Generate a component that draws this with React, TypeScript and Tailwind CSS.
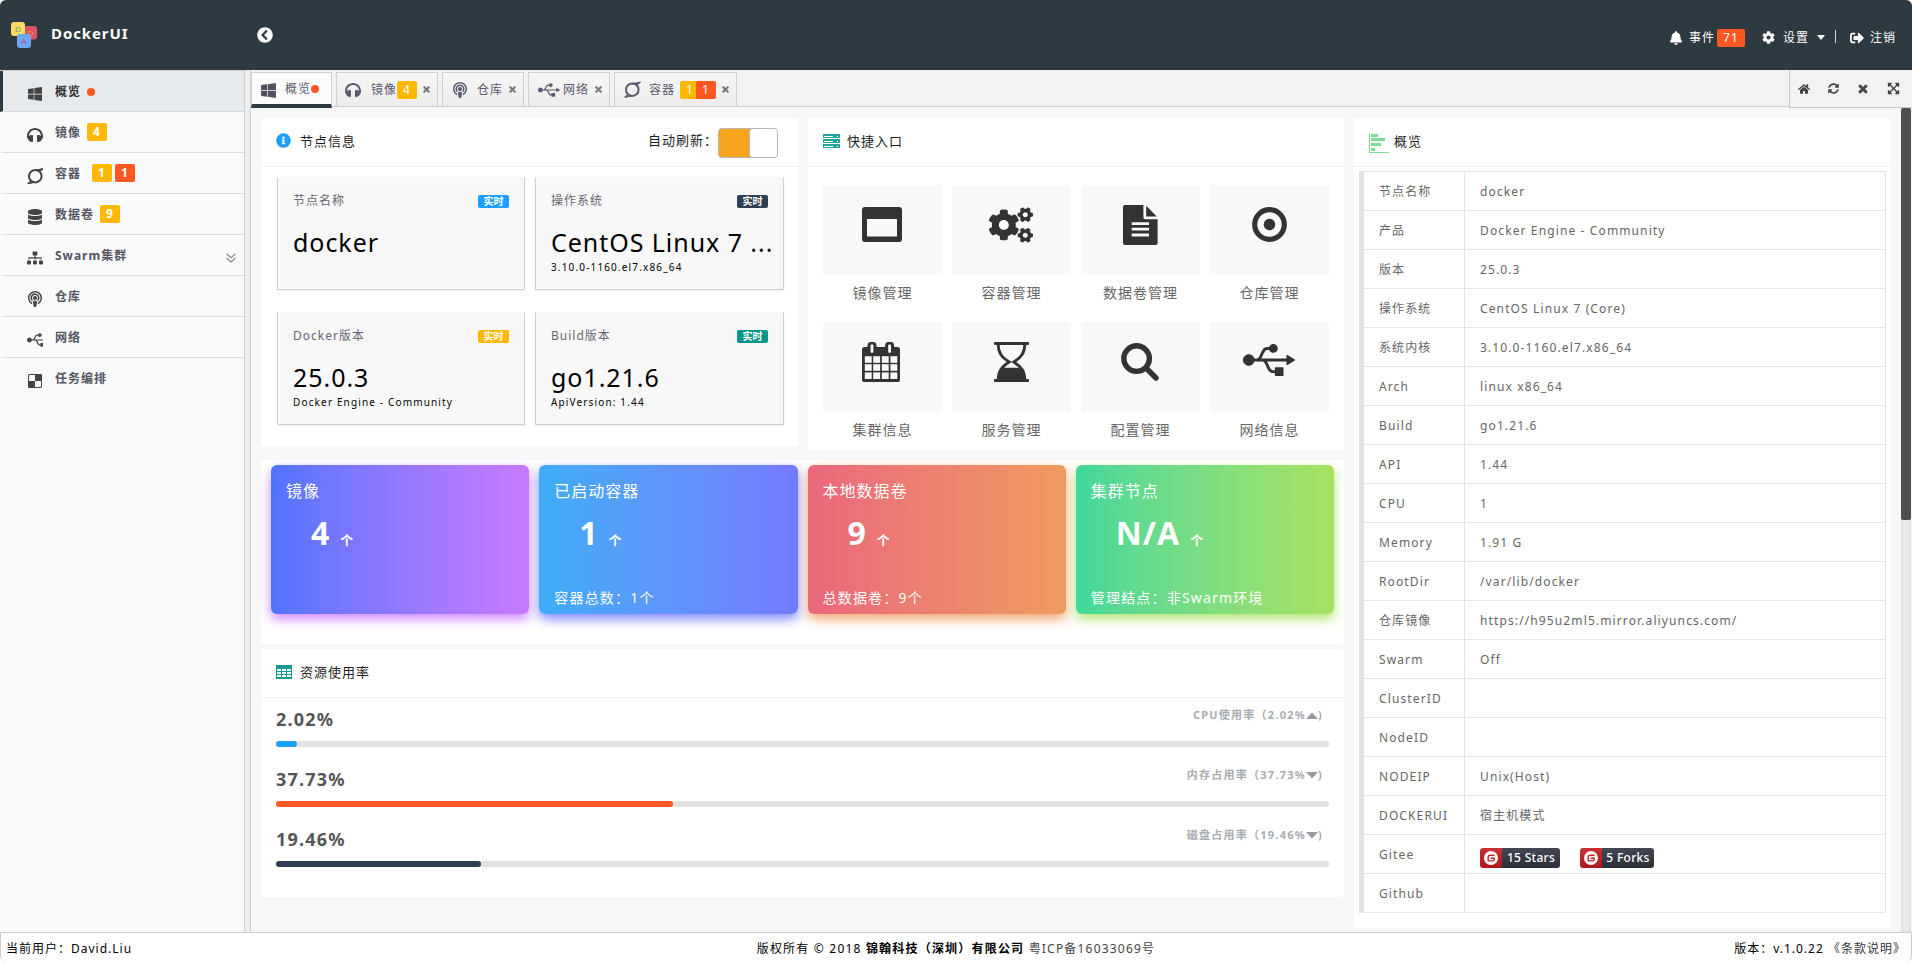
import type { ReactNode } from "react";
import {
  FaBell,
  FaChevronCircleLeft,
  FaCog,
  FaCogs,
  FaDatabase,
  FaDelicious,
  FaExpandArrowsAlt,
  FaHeadphones,
  FaHome,
  FaInfoCircle,
  FaPodcast,
  FaSignOutAlt,
  FaSitemap,
  FaSyncAlt,
  FaTimes,
  FaUsb,
  FaWindows,
} from "react-icons/fa";

type IconProps = { className?: string };

function ContainerIcon({ className }: IconProps) {
  return (
    <svg viewBox="0 0 17 16" className={className} fill="none" stroke="currentColor" strokeWidth="2">
      <ellipse cx="8.3" cy="8.2" rx="6.3" ry="6.2" />
      <path d="M8.5 2 C11 2 13 1.6 16.6 .7 M8 14.3 C6 14.3 3.5 15 .6 15.6" strokeWidth="1.6" />
      <path d="M12.5 3.5 L15.5 1.2 M4 13 L1.5 15.2" strokeWidth="1.4" />
    </svg>
  );
}

function LogoIcon() {
  return (
    <svg viewBox="0 0 28 28" className="size-7" fontSize="8" fontFamily="Liberation Sans" textAnchor="middle" letterSpacing="0">
      <rect x="14" y="5" width="13" height="13.5" rx="3" fill="#dd5161" />
      <text x="20.5" y="14.8" fill="#f39a3c">D</text>
      <rect x="1" y="1" width="14" height="14" rx="3" fill="#f7db63" />
      <text x="8" y="11" fill="#5f9a86">D</text>
      <rect x="7" y="13" width="14" height="14" rx="3" fill="#6ea6f3" />
      <text x="14" y="23" fill="#c0508a">A</text>
    </svg>
  );
}

function ServerIcon() {
  return (
    <svg viewBox="0 0 17 14" className="h-3.5 w-[17px]" shapeRendering="crispEdges">
      {[0, 5, 10].map((y) => (
        <g key={y}>
          <rect y={y} width="17" height="4" fill="#009688" opacity=".85" />
          <rect x="1" y={y + 1.5} width="9" height="1" fill="#fff" />
          <rect x="14" y={y + 1.5} width="1" height="1" fill="#fff" />
        </g>
      ))}
    </svg>
  );
}

function BarsIcon() {
  return (
    <svg viewBox="0 0 20 20" className="size-5" fill="#7edb96" shapeRendering="crispEdges">
      <path d="M0 0h1v19h19v1H0z" />
      <path d="M2 1h7v3H2zM2 5h14v3H2zM2 10h10v3H2zM2 15h4v3H2z" />
    </svg>
  );
}

function TableIcon() {
  return (
    <svg viewBox="0 0 16 14" className="h-3.5 w-4" shapeRendering="crispEdges">
      <rect width="16" height="14" rx="1" fill="#149b8e" />
      {[4, 7, 10].map((y) =>
        [1, 6, 11].map((x) => <rect key={`${x}-${y}`} x={x} y={y} width="4" height="2" fill="#fff" />),
      )}
    </svg>
  );
}

function WindowIcon() {
  return (
    <svg viewBox="0 0 40 35" className="h-[35px] w-10" fill="currentColor">
      <path fillRule="evenodd" d="M3 0h34a3 3 0 0 1 3 3v29a3 3 0 0 1-3 3H3a3 3 0 0 1-3-3V3a3 3 0 0 1 3-3zM5 12v17.5h30V12z" />
    </svg>
  );
}

function FileIcon() {
  return (
    <svg viewBox="0 0 35 40" className="h-10 w-[35px]" fill="currentColor">
      <path
        fillRule="evenodd"
        d="M1.8 0H20.4V12.4A1.8 1.8 0 0 0 22.2 14.2H34.6V38.2A1.8 1.8 0 0 1 32.8 40H1.8A1.8 1.8 0 0 1 0 38.2V1.8A1.8 1.8 0 0 1 1.8 0zM8.7 17.2V20H26V17.2zM8.7 22.8V25.6H26V22.8zM8.7 28.6V31.4H26V28.6z"
      />
      <path d="M23.2 .8L33.8 11.4H23.2z" />
    </svg>
  );
}

function TargetIcon() {
  return (
    <svg viewBox="0 0 35 35" className="size-[35px]">
      <circle cx="17.5" cy="17.5" r="14.8" fill="none" stroke="currentColor" strokeWidth="5.2" />
      <circle cx="17.5" cy="17.5" r="5.8" fill="currentColor" />
    </svg>
  );
}

function CalendarIcon() {
  return (
    <svg viewBox="0 0 38 40" className="mr-0.5 h-10 w-[38px]" fill="currentColor">
      <rect y="5" width="38" height="35" rx="2.6" />
      {[14.2, 22.2, 30.4].map((y) =>
        [2.8, 11.2, 19.8, 28.4].map((x) => (
          <rect key={`${x}-${y}`} x={x} y={y} width="6.9" height="6.6" fill="#f8f8f8" />
        )),
      )}
      <rect x="5.4" y="-.2" width="9.2" height="12.4" rx="4" />
      <rect x="23" y="-.2" width="9.2" height="12.4" rx="4" />
      <rect x="8.6" y="2.6" width="2.8" height="8.2" rx=".8" fill="#f8f8f8" />
      <rect x="26.2" y="2.6" width="2.8" height="8.2" rx=".8" fill="#f8f8f8" />
    </svg>
  );
}

function HourglassIcon() {
  return (
    <svg viewBox="0 0 35 40" className="h-10 w-[35px]" fill="currentColor">
      <rect width="35" height="2.9" rx=".8" />
      <rect y="37.1" width="35" height="2.9" rx=".8" />
      <path
        d="M4.2 2C4.2 11 7.5 15 15.2 20C7.5 25 4.2 29 4.2 38M30.8 2C30.8 11 27.5 15 19.8 20C27.5 25 30.8 29 30.8 38"
        fill="none"
        stroke="currentColor"
        strokeWidth="2.8"
      />
      <path d="M9 25.8H26C29.5 29 30.8 33 30.8 38H4.2C4.2 33 5.5 29 9 25.8z" />
    </svg>
  );
}

function SearchIcon() {
  return (
    <svg viewBox="0 0 38 38" className="size-[38px]" fill="none" stroke="currentColor">
      <circle cx="15.6" cy="15.6" r="12.8" strokeWidth="5.4" />
      <path d="M25.5 25.5L35 35" strokeWidth="5.4" strokeLinecap="round" />
    </svg>
  );
}

function GiteeBadge({ text, className }: { text: string; className: string }) {
  return (
    <span className={`flex h-5 overflow-hidden rounded-[3px] ${className}`}>
      <span className="flex w-[22px] items-center justify-center bg-gradient-to-b from-[#cb2f37] to-[#ac151c]">
        <svg viewBox="0 0 14 14" className="size-3.5">
          <circle cx="7" cy="7" r="7" fill="#fff" />
          <path d="M10.5 4.2H6.2A2 2 0 0 0 4.2 6.2V9.9H8.4A2 2 0 0 0 10.2 7.3H6.6" fill="none" stroke="#c1272d" strokeWidth="1.4" />
        </svg>
      </span>
      <span className="flex-1 bg-gradient-to-b from-[#434854] to-[#2b2f3a] text-center text-xs/5 font-medium tracking-[0.3px] text-white">
        {text}
      </span>
    </span>
  );
}

const badgeTone = {
  yellow: "bg-[#ffb800]",
  red: "bg-[#ff5722]",
} as const;

type Tone = keyof typeof badgeTone;

function CountBadge({ value, tone, className = "" }: { value: string; tone: Tone; className?: string }) {
  return (
    <span className={`h-[18px] shrink-0 rounded-xs px-1.5 text-center text-xs/[18px] text-white ${badgeTone[tone]} ${className}`}>
      {value}
    </span>
  );
}

type MenuItem = {
  label: string;
  icon: ReactNode;
  badges?: { value: string; tone: Tone; className: string }[];
  active?: boolean;
  expandable?: boolean;
};

const menu: MenuItem[] = [
  { label: "概览", icon: <FaWindows className="size-4" />, active: true },
  { label: "镜像", icon: <FaHeadphones className="size-4" />, badges: [{ value: "4", tone: "yellow", className: "ml-1.5" }] },
  {
    label: "容器",
    icon: <ContainerIcon className="h-4 w-[17px]" />,
    badges: [
      { value: "1", tone: "yellow", className: "ml-[11px]" },
      { value: "1", tone: "red", className: "ml-[3px]" },
    ],
  },
  { label: "数据卷", icon: <FaDatabase className="size-4" />, badges: [{ value: "9", tone: "yellow", className: "ml-1.5" }] },
  { label: "Swarm集群", icon: <FaSitemap className="size-4" />, expandable: true },
  { label: "仓库", icon: <FaPodcast className="size-4" /> },
  { label: "网络", icon: <FaUsb className="h-5 w-[22px]" /> },
  { label: "任务编排", icon: <FaDelicious className="size-4" /> },
];

function Sidebar() {
  return (
    <aside className="w-[245px] border-t border-r border-[#cfcfcf] bg-[#f9fafc]">
      {menu.map((item) => (
        <div
          key={item.label}
          className={`flex h-[41px] items-center border-b border-l-3 pl-6 text-xs font-bold last:border-b-transparent ${
            item.active
              ? "border-[#d5d8dc] border-l-[#2d3a41] bg-[#e6eaed] text-[#333]"
              : "border-[#d8dbde] border-l-transparent text-[#555561]"
          }`}
        >
          <span className="mt-1.5 flex h-5 w-4 items-center overflow-hidden text-[#444]">
            <span className="shrink-0">{item.icon}</span>
          </span>
          <span className="mt-0.5 ml-3 leading-5">{item.label}</span>
          {item.active && <span className="mt-0.5 ml-1.5 size-2 rounded-full bg-[#ff5722]" />}
          {item.badges?.map((badge, i) => (
            <CountBadge key={i} value={badge.value} tone={badge.tone} className={`w-5 ${badge.className}`} />
          ))}
          {item.expandable && (
            <svg viewBox="0 0 10 10" className="mt-1.5 mr-2 ml-auto size-2.5" fill="none" stroke="#888" strokeWidth="1.2">
              <path d="M.5 .8L5 4.8L9.5 .8M.5 5L5 9L9.5 5" />
            </svg>
          )}
        </div>
      ))}
    </aside>
  );
}

function Tab({ width, active, children }: { width: string; active?: boolean; children: ReactNode }) {
  return (
    <div
      className={`flex items-center border border-b-0 border-[#cfcfcf] text-xs text-[#5a5a6e] ${width} ${
        active ? "h-9 border-b-4 border-b-[#2d3a41] bg-[#fcfcfc]" : "h-[34px] bg-gradient-to-b from-[#f7f7f7] to-[#ececec]"
      }`}
    >
      {children}
    </div>
  );
}

function CloseIcon() {
  return <FaTimes className="mr-1.5 ml-auto size-[9px] stroke-[#777] stroke-[40] text-[#777]" />;
}

function TabBar() {
  return (
    <div className="flex h-9 shrink-0 bg-[#f2f2f2]">
      <div className="flex h-[37px] flex-1 items-start gap-1 border-b border-[#cfcfcf] pt-0.5">
        <Tab width="w-[81px]" active>
          <FaWindows className="mt-1 ml-2 size-[17px] text-[#4f4f5e]" />
          <span className="ml-2">概览</span>
          <span className="size-2 rounded-full bg-[#ff5722]" />
        </Tab>
        <Tab width="w-[102px]">
          <FaHeadphones className="ml-2 size-4" />
          <span className="ml-2.5">镜像</span>
          <CountBadge value="4" tone="yellow" className="w-5" />
          <CloseIcon />
        </Tab>
        <Tab width="w-[82px]">
          <FaPodcast className="ml-[9px] size-4" />
          <span className="ml-[9px]">仓库</span>
          <CloseIcon />
        </Tab>
        <Tab width="w-[82px]">
          <FaUsb className="ml-[9px] size-[22px]" />
          <span className="ml-[3px]">网络</span>
          <CloseIcon />
        </Tab>
        <Tab width="w-[123px]">
          <ContainerIcon className="ml-[9px] h-[17px] w-[17px]" />
          <span className="ml-2">容器</span>
          <CountBadge value="1" tone="yellow" className="ml-[5px] w-5" />
          <CountBadge value="1" tone="red" className="-ml-1 w-5" />
          <CloseIcon />
        </Tab>
      </div>
      <div className="flex h-[38px] w-[123px] items-center justify-between border-b border-l border-[#c4c4c4] pr-[12px] pl-2 text-[#444]">
        <FaHome className="size-3" />
        <FaSyncAlt className="size-[11px]" />
        <FaTimes className="size-3 stroke-[#444] stroke-[36]" />
        <FaExpandArrowsAlt className="size-[13px]" />
      </div>
    </div>
  );
}

function PanelHeader({ icon, title, children }: { icon: ReactNode; title: string; children?: ReactNode }) {
  return (
    <div className="flex h-[49px] shrink-0 items-center border-b border-[#efefef] px-[15px] text-[13px] text-[#222]">
      {icon}
      <h2 className="-mt-0.5 leading-6">{title}</h2>
      {children}
    </div>
  );
}

const nodeCards = [
  { label: "节点名称", value: "docker", note: "", tone: "bg-[#1e9fff]" },
  { label: "操作系统", value: "CentOS Linux 7 ...", note: "3.10.0-1160.el7.x86_64", tone: "bg-[#2f4056]" },
  { label: "Docker版本", value: "25.0.3", note: "Docker Engine - Community", tone: "bg-[#ffb800]" },
  { label: "Build版本", value: "go1.21.6", note: "ApiVersion: 1.44", tone: "bg-[#009688]" },
];

function NodePanel() {
  return (
    <section className="h-[328px] w-[537px] rounded-[3px] bg-white">
      <PanelHeader icon={<FaInfoCircle className="mt-[-3px] mr-[9px] size-[15px] text-[#1e9fff]" />} title="节点信息">
        <span className="-mt-0.5 ml-auto">自动刷新：</span>
        <span className="mt-0.5 mr-[5px] flex h-[30px] w-[60px] justify-end rounded border border-[#b9b9b9] bg-[#f7a41f]">
          <span className="w-[27px] rounded-[3px] bg-white shadow-[-1px_0_1px_#bbb]" />
        </span>
      </PanelHeader>
      <div className="grid grid-cols-[248px_249px] gap-x-[10px] gap-y-[22px] pt-2.5 pl-4">
        {nodeCards.map((card) => (
          <article
            key={card.label}
            className="h-[113px] rounded-[1px] border border-t-0 border-[#d0d0d0] bg-[#f8f8f8] px-[15px] pt-[15px] shadow-[0_1px_2px_rgba(0,0,0,.08)]"
          >
            <div className="flex items-center justify-between">
              <p className="text-xs/[18px] text-[#666672]">{card.label}</p>
              <span className={`h-[13px] w-[31px] rounded-xs text-center text-[10px]/[13px] font-bold tracking-[0] text-white ${card.tone}`}>
                实时
              </span>
            </div>
            <p className="mt-[15px] text-[25px]/[34px] tracking-[0.95px] whitespace-nowrap text-black">{card.value}</p>
            <p className="text-[10px]/4 tracking-[1.15px] text-black">{card.note}</p>
          </article>
        ))}
      </div>
    </section>
  );
}

const shortcuts = [
  { label: "镜像管理", icon: <WindowIcon /> },
  { label: "容器管理", icon: <FaCogs className="size-[44px]" /> },
  { label: "数据卷管理", icon: <FileIcon /> },
  { label: "仓库管理", icon: <TargetIcon /> },
  { label: "集群信息", icon: <CalendarIcon /> },
  { label: "服务管理", icon: <HourglassIcon /> },
  { label: "配置管理", icon: <SearchIcon /> },
  { label: "网络信息", icon: <FaUsb className="mb-1 size-[52px]" /> },
];

function ShortcutPanel() {
  return (
    <section className="h-[332px] w-[536px] rounded-[3px] bg-white">
      <PanelHeader
        icon={
          <span className="mt-[-3px] mr-[7px]">
            <ServerIcon />
          </span>
        }
        title="快捷入口"
      />
      <div className="grid grid-cols-4 gap-x-2.5 px-[15px] pt-[18px]">
        {shortcuts.map((item) => (
          <div key={item.label} className="h-[137px] text-center">
            <div className="flex h-[90px] items-center justify-center rounded-xs bg-[#f8f8f8] pr-px pb-[11px] text-[#333]">{item.icon}</div>
            <p className="mt-[7px] text-sm/[22px] text-[#666]">{item.label}</p>
          </div>
        ))}
      </div>
    </section>
  );
}

const stats = [
  { title: "镜像", value: "4", note: "", tone: "from-[#5073ff] to-[#c979ff] shadow-[0_5px_12px_rgba(201,121,255,.9)]" },
  { title: "已启动容器", value: "1", note: "容器总数：1个", tone: "from-[#3dadf7] to-[#737aff] shadow-[0_5px_12px_rgba(115,122,255,.9)]" },
  { title: "本地数据卷", value: "9", note: "总数据卷：9个", tone: "from-[#ea677c] to-[#ef9b5f] shadow-[0_5px_12px_rgba(239,155,95,.9)]" },
  { title: "集群节点", value: "N/A", note: "管理结点：非Swarm环境", tone: "from-[#42d79b] to-[#a6e25f] shadow-[0_5px_12px_rgba(166,226,95,.9)]" },
];

function StatsPanel() {
  return (
    <section className="grid h-[184px] grid-cols-4 gap-2.5 overflow-hidden rounded-[3px] bg-white px-2.5 pt-[5px]">
      {stats.map((stat) => (
        <article key={stat.title} className={`flex h-[149px] flex-col rounded-md bg-gradient-to-r pl-[15px] text-white ${stat.tone}`}>
          <p className="mt-3.5 text-base/6">{stat.title}</p>
          <p className="mt-[7px] ml-[25px] flex items-baseline gap-2.5 text-[32px]/[46px] font-bold">
            {stat.value}
            <span className="text-[13px]">个</span>
          </p>
          <p className="mt-auto mb-1 text-sm/6 tracking-[1.2px]">{stat.note}</p>
        </article>
      ))}
    </section>
  );
}

const usages = [
  { label: "CPU使用率", percent: "2.02", up: true, color: "bg-[#1e9fff]" },
  { label: "内存占用率", percent: "37.73", up: false, color: "bg-[#ff5722]" },
  { label: "磁盘占用率", percent: "19.46", up: false, color: "bg-[#2f4056]" },
];

function UsagePanel() {
  return (
    <section className="h-[248px] rounded-[3px] bg-white">
      <PanelHeader
        icon={
          <span className="mt-[-3px] mr-2">
            <TableIcon />
          </span>
        }
        title="资源使用率"
      />
      <div className="px-[15px] pt-[8px]">
        {usages.map((usage) => (
          <div key={usage.label} className="h-[60px]">
            <div className="flex h-[35px] items-start justify-between pr-1.5 font-bold">
              <span className="text-lg/[26px] tracking-[1.2px] text-[#555]">{usage.percent}%</span>
              <span className="flex items-center text-[11px]/[18px] tracking-[1.25px] text-[#a8abb0]">
                {usage.label}（{usage.percent}%
                <svg viewBox="0 0 12 7" className="h-[7px] w-3" fill="#999">
                  <path d={usage.up ? "M6 .5L12 7H0z" : "M6 6.5L12 0H0z"} />
                </svg>
                )
              </span>
            </div>
            <div className="h-1.5 rounded-full bg-[#e2e2e2]">
              <div className={`h-1.5 rounded-full ${usage.color}`} style={{ width: `${usage.percent}%` }} />
            </div>
          </div>
        ))}
      </div>
    </section>
  );
}

const details: [string, ReactNode][] = [
  ["节点名称", "docker"],
  ["产品", "Docker Engine - Community"],
  ["版本", "25.0.3"],
  ["操作系统", "CentOS Linux 7 (Core)"],
  ["系统内核", "3.10.0-1160.el7.x86_64"],
  ["Arch", "linux x86_64"],
  ["Build", "go1.21.6"],
  ["API", "1.44"],
  ["CPU", "1"],
  ["Memory", "1.91 G"],
  ["RootDir", "/var/lib/docker"],
  ["仓库镜像", "https://h95u2ml5.mirror.aliyuncs.com/"],
  ["Swarm", "Off"],
  ["ClusterID", ""],
  ["NodeID", ""],
  ["NODEIP", "Unix(Host)"],
  ["DOCKERUI", "宿主机模式"],
  [
    "Gitee",
    <span className="mt-1.5 flex gap-5">
      <GiteeBadge text="15 Stars" className="w-20" />
      <GiteeBadge text="5 Forks" className="w-[74px]" />
    </span>,
  ],
  ["Github", ""],
];

function DetailPanel() {
  return (
    <section className="h-[810px] w-[537px] rounded-[3px] bg-white">
      <PanelHeader
        icon={
          <span className="mt-0.5 mr-[5px]">
            <BarsIcon />
          </span>
        }
        title="概览"
      />
      <div className="mx-[5px] mt-1 border-t border-r border-l-5 border-[#e2e2e2] text-xs tracking-[1.12px] text-[#666]">
        {details.map(([label, value]) => (
          <div key={label} className="flex h-[39px] border-b border-[#e6e6e6]">
            <div className="flex w-[101px] items-center border-r border-[#e6e6e6] pt-0.5 pl-[15px]">{label}</div>
            <div className="flex items-center pt-0.5 pl-[15px]">{value}</div>
          </div>
        ))}
      </div>
    </section>
  );
}

function Header() {
  return (
    <header className="flex h-[70px] shrink-0 items-center rounded-t-md bg-[#2d3a41] text-white">
      <div className="ml-2.5">
        <LogoIcon />
      </div>
      <h1 className="-mt-1 ml-[13px] w-[206px] text-[15px] font-bold tracking-[0.9px]">DockerUI</h1>
      <FaChevronCircleLeft className="size-4" />
      <div className="mt-[5px] mr-4 ml-auto flex items-center text-xs">
        <FaBell className="size-3.5" />
        <span className="ml-1.5">事件</span>
        <CountBadge value="71" tone="red" className="ml-0.5 w-7" />
        <FaCog className="ml-[17px] size-[13px]" />
        <span className="ml-2">设置</span>
        <span className="ml-2 border-4 border-t-5 border-b-0 border-transparent border-t-white" />
        <span className="mb-0.5 ml-2.5 h-[13px] w-px bg-[#b5dcec]" />
        <FaSignOutAlt className="ml-3.5 size-3.5" />
        <span className="ml-1.5">注销</span>
      </div>
    </header>
  );
}

export default function App() {
  return (
    <div className="flex h-[962px] w-[1912px] flex-col overflow-hidden bg-white font-['Noto_Sans','Noto_Sans_CJK_SC',sans-serif] tracking-[1px]">
      <Header />
      <div className="flex h-[862px] shrink-0">
        <Sidebar />
        <div className="w-[5px] bg-[#eee]" />
        <main className="flex flex-1 flex-col border-l border-[#cfcfcf] bg-[#f7f7f7]">
          <TabBar />
          <div className="flex flex-1 pl-2.5">
            <div className="flex gap-2.5 pt-3">
              <div className="flex w-[1083px] flex-col">
                <div className="flex h-[342px] justify-between">
                  <NodePanel />
                  <ShortcutPanel />
                </div>
                <StatsPanel />
                <div className="h-[5px]" />
                <UsagePanel />
              </div>
              <DetailPanel />
            </div>
            <div className="mt-0.5 mr-px ml-auto w-2.5 bg-[#e9e9e9] shadow-[inset_0_0_3px_#ccc]">
              <div className="h-[412px] rounded-xs bg-[#4f4f4f]" />
            </div>
          </div>
        </main>
      </div>
      <footer className="grid h-[30px] shrink-0 grid-cols-3 items-center rounded-b-md border border-b-0 border-[#ccc] bg-white px-[5px] pt-0.5 text-xs text-black">
        <span>当前用户：David.Liu</span>
        <span className="text-center tracking-[1.2px]">
          版权所有 © 2018 <b>锦翰科技（深圳）有限公司</b> <span className="text-[#444]">粤ICP备16033069号</span>
        </span>
        <span className="text-right">
          版本：v.1.0.22 <span className="text-[#333]">《条款说明》</span>
        </span>
      </footer>
    </div>
  );
}
